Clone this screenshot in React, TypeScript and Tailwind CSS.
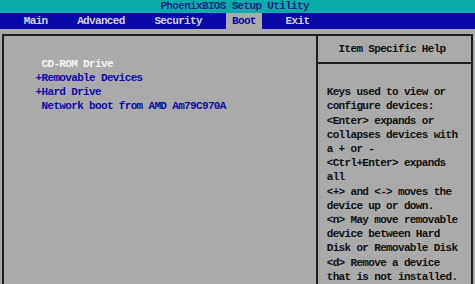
import React from 'react';

const font = "font-['Liberation_Mono','DejaVu_Sans_Mono',monospace] font-bold text-[11px] tracking-[-0.66px] leading-[14.2px] whitespace-pre";

const bootItems = [
  { text: ' CD-ROM Drive', active: true },
  { text: '+Removable Devices' },
  { text: '+Hard Drive' },
  { text: ' Network boot from AMD Am79C970A' },
];

const help = [
  'Keys used to view or',
  'configure devices:',
  '<Enter> expands or',
  'collapses devices with',
  'a + or -',
  '<Ctrl+Enter> expands',
  'all',
  '<+> and <-> moves the',
  'device up or down.',
  '<n> May move removable',
  'device between Hard',
  'Disk or Removable Disk',
  '<d> Remove a device',
  'that is not installed.',
];

export default function App() {
  return (
    <div className={`w-[475px] h-[284px] overflow-hidden bg-[#aaaaaa] ${font}`}>
      {/* title */}
      <div className="h-[13px] bg-[#0aacac] text-[#0c2a7c] pl-[160.4px] leading-[13px]">
        PhoenixBIOS Setup Utility
      </div>

      {/* menu bar */}
      <div className="h-[16px] bg-[#0808a8] flex items-center text-[#d4d4e4]">
        <span className="ml-[23.8px]">Main</span>
        <span className="ml-[29.6px]">Advanced</span>
        <span className="ml-[29.7px]">Security</span>
        <span className="ml-[24.1px] h-full flex items-center bg-[#aaaaaa] text-[#0808a8] px-[6px]">Boot</span>
        <span className="ml-[23.8px]">Exit</span>
      </div>

      {/* main box */}
      <div className="mt-[5px] ml-[2px] mr-[2px] h-[260px] border-2 border-b-0 border-[#1e1e1e] flex">
        <div className="w-[312px] pt-[20.8px] pl-[31.6px]">
          {bootItems.map((it) => (
            <div key={it.text} className={it.active ? 'text-[#f4f4f4]' : 'text-[#0c0ca8]'}>
              {it.text}
            </div>
          ))}
        </div>

        <div className="flex-1 border-l-2 border-[#1e1e1e] flex flex-col text-[#101010]">
          <div className="h-[28px] border-b-2 border-[#1e1e1e] pt-[6px] pl-[20.6px]">
            Item Specific Help
          </div>
          <div className="pt-[21.2px] pl-[8.7px]">
            {help.map((l) => (
              <div key={l}>{l}</div>
            ))}
          </div>
        </div>
      </div>
    </div>
  );
}
